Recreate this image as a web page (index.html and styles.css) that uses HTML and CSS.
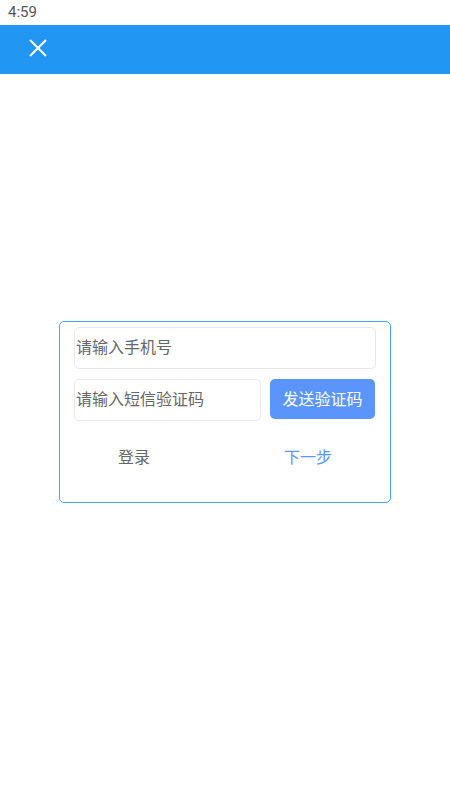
FILE: index.html
```html
<!DOCTYPE html>
<html lang="zh">
<head>
    <meta charset="UTF-8">
    <meta name="viewport" content="width=device-width, initial-scale=1.0">
    <title>短信登录</title>
    <link rel="stylesheet" href="styles.css">
</head>
<body>
    <div class="status-bar">4:59</div>
    <div class="top-bar">
        <button class="close-btn" aria-label="关闭">
            <svg width="18" height="18" viewBox="0 0 18 18">
                <path d="M1 1 L17 17 M17 1 L1 17" stroke="#fff" stroke-width="2" fill="none"/>
            </svg>
        </button>
    </div>

    <div class="page">
        <div class="login-box">
            <input type="text" class="field" placeholder="请输入手机号">
            <div class="code-row">
                <input type="text" class="field" placeholder="请输入短信验证码">
                <button class="send-btn">发送验证码</button>
            </div>
            <div class="actions">
                <a class="link login-link">登录</a>
                <a class="link next-link">下一步</a>
            </div>
        </div>
    </div>
</body>
</html>
```

FILE: styles.css
```css
* {
    box-sizing: border-box;
}
body {
    margin: 0;
    font-family: Roboto, "Noto Sans CJK SC", sans-serif;
    background: #fff;
}
.status-bar {
    height: 25px;
    padding: 4px 0 0 8px;
    font-size: 15px;
    line-height: 17px;
    color: #555;
}
.top-bar {
    height: 49px;
    background-color: #2196f3;
    display: flex;
    align-items: flex-start;
    padding: 14px 0 0 29px;
}
.close-btn {
    background: none;
    border: none;
    padding: 0;
    width: 18px;
    height: 18px;
    display: block;
}
.close-btn svg {
    display: block;
}
.page {
    padding: 247px 59px 0 59px;
}
.login-box {
    border: 1px solid #42a5f5;
    border-radius: 5px;
    padding: 5px 14px 0 14px;
    height: 182px;
}
.field {
    display: block;
    width: 100%;
    height: 42px;
    padding: 0 0 2px 1px;
    border: 1px solid #e8e8e8;
    border-radius: 5px;
    font-family: Roboto, "Noto Sans CJK SC", sans-serif;
    font-size: 16px;
    color: #333;
    outline: none;
}
.field::placeholder {
    color: #666;
}
.code-row {
    display: flex;
    gap: 9px;
    margin-top: 10px;
}
.code-row .field {
    flex: 0 0 187px;
}
.send-btn {
    flex: 0 0 105px;
    height: 40px;
    background-color: #5b94fb;
    color: #fff;
    border: none;
    border-radius: 5px;
    font-family: Roboto, "Noto Sans CJK SC", sans-serif;
    font-size: 16px;
    padding: 0 0 2px 0;
}
.actions {
    display: flex;
    margin-top: 19px;
}
.link {
    font-size: 16px;
    line-height: 36px;
    text-decoration: none;
}
.login-link {
    color: #666;
    margin-left: 44px;
}
.next-link {
    color: #5b94fb;
    margin-left: auto;
    margin-right: 44px;
}
```
